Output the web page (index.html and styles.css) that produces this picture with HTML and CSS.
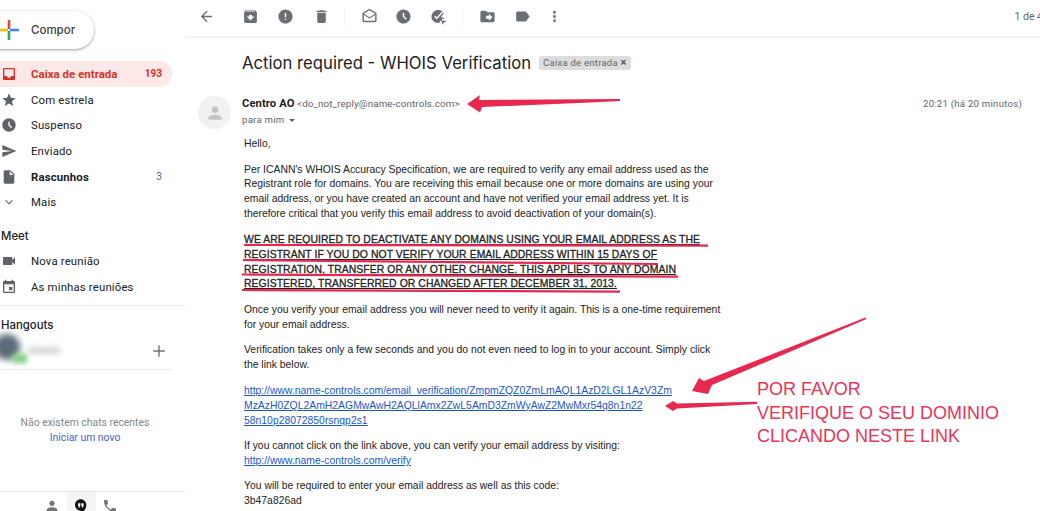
FILE: index.html
```html
<!DOCTYPE html>
<html lang="pt">
<head>
<meta charset="utf-8">
<title>Action required - WHOIS Verification</title>
<link rel="stylesheet" href="styles.css">
</head>
<body>
<div class="app">
  <aside class="sidebar">
    <div class="compose-wrap">
      <button class="compose">
        <svg class="plus" viewBox="0 0 20 20"><rect x="0" y="8.700" width="9" height="2.600" fill="#fbbc04"/><rect x="8.700" y="0" width="2.600" height="9" fill="#ea4335"/><rect x="11" y="8.700" width="9" height="2.600" fill="#4285f4"/><rect x="8.700" y="11" width="2.600" height="9" fill="#34a853"/></svg>
        <span>Compor</span>
      </button>
    </div>
    <nav class="nav">
      <a class="row active"><svg class="ic" viewBox="0 0 24 24"><path d="M19 3H5c-1.100 0-2 .9-2 2v14c0 1.100.9 2 2 2h14c1.100 0 2-.9 2-2V5c0-1.100-.9-2-2-2zm0 12h-4c0 1.660-1.350 3-3 3s-3-1.340-3-3H5V5h14v10z"/></svg><span class="lab">Caixa de entrada</span><span class="cnt">193</span></a>
      <a class="row"><svg class="ic" viewBox="0 0 24 24"><path d="M12 17.270L18.180 21l-1.640-7.030L22 9.240l-7.190-.61L12 2 9.190 8.630 2 9.240l5.460 4.730L5.820 21z"/></svg><span class="lab">Com estrela</span></a>
      <a class="row"><svg class="ic" viewBox="0 0 24 24"><path d="M11.990 2C6.470 2 2 6.480 2 12s4.470 10 9.990 10C17.520 22 22 17.520 22 12S17.520 2 11.990 2zm3.300 14.710L11 12.410V7h2v4.590l3.710 3.710-1.420 1.410z"/></svg><span class="lab">Suspenso</span></a>
      <a class="row"><svg class="ic" viewBox="0 0 24 24"><path d="M2.010 21L23 12 2.010 3 2 10l15 2-15 2z"/></svg><span class="lab">Enviado</span></a>
      <a class="row strong"><svg class="ic" viewBox="0 0 24 24"><path d="M14 2H6c-1.100 0-1.990.9-1.990 2L4 20c0 1.100.89 2 1.990 2H18c1.100 0 2-.9 2-2V8l-6-6zm-1 7V3.500L18.500 9H13z"/></svg><span class="lab">Rascunhos</span><span class="cnt">3</span></a>
      <a class="row"><svg class="ic small" viewBox="0 0 24 24"><path d="M7.410 8.590L12 13.170l4.590-4.580L18 10l-6 6-6-6z"/></svg><span class="lab">Mais</span></a>
    </nav>
    <section class="meet">
      <h3 class="head">Meet</h3>
      <a class="row"><svg class="ic" viewBox="0 0 24 24"><path d="M17 10.500V7c0-.55-.45-1-1-1H4c-.55 0-1 .45-1 1v10c0 .55.45 1 1 1h12c.55 0 1-.45 1-1v-3.500l4 4v-11l-4 4z"/></svg><span class="lab">Nova reunião</span></a>
      <a class="row"><svg class="ic" viewBox="0 0 24 24"><path d="M17 12h-5v5h5v-5zM16 1v2H8V1H6v2H5c-1.110 0-1.990.9-1.990 2L3 19c0 1.100.89 2 2 2h14c1.100 0 2-.9 2-2V5c0-1.100-.9-2-2-2h-1V1h-2zm3 18H5V8h14v11z"/></svg><span class="lab">As minhas reuniões</span></a>
    </section>
    <section class="hangouts">
      <h3 class="head">Hangouts</h3>
      <div class="contact">
        <div class="blur-avatar"></div>
        <div class="blur-status"></div>
        <div class="blur-name"></div>
        <svg class="add" viewBox="0 0 12 12"><path d="M5.400 1h1.200v4.400H11v1.200H6.600V11H5.400V6.600H1V5.400h4.400z"/></svg>
      </div>
    </section>
    <div class="empty">
      <p>Não existem chats recentes</p>
      <a>Iniciar um novo</a>
    </div>
    <div class="tabs">
      <div class="tab"><svg viewBox="0 0 24 24"><path d="M12 12c2.200 0 4-1.800 4-4s-1.800-4-4-4-4 1.800-4 4 1.800 4 4 4zm0 2c-2.700 0-8 1.300-8 4v2h16v-2c0-2.700-5.300-4-8-4z"/></svg></div>
      <div class="tab on"><svg viewBox="0 0 24 24"><path d="M11.500 2C6.800 2 3 5.800 3 10.500S6.800 19 11.500 19H12v3.500c4.900-2.300 8-7 8-12C20 5.800 16.200 2 11.500 2zM11 12l-1.500 2.500H8L9 12H7.500V8H11v4zm5 0l-1.500 2.500H13l1-2.500h-1.500V8H16v4z"/></svg></div>
      <div class="tab"><svg viewBox="0 0 24 24"><path d="M6.620 10.790c1.440 2.830 3.760 5.140 6.590 6.590l2.200-2.200c.27-.27.67-.36 1.020-.24 1.120.37 2.330.57 3.570.57.550 0 1 .45 1 1V20c0 .55-.45 1-1 1C10.610 21 3 13.390 3 4c0-.55.45-1 1-1h3.500c.55 0 1 .45 1 1 0 1.250.2 2.450.57 3.570.11.350.03.740-.25 1.020l-2.200 2.200z"/></svg></div>
    </div>
  </aside>

  <main class="main">
    <header class="toolbar">
      <svg class="tool back" viewBox="0 0 24 24"><path d="M20 11H7.830l5.590-5.590L12 4l-8 8 8 8 1.410-1.410L7.830 13H20v-2z"/></svg>
      <div class="group g1">
        <svg class="tool" viewBox="0 0 24 24"><path d="M20.540 5.230l-1.390-1.680C18.880 3.210 18.470 3 18 3H6c-.47 0-.88.21-1.160.55L3.460 5.230C3.170 5.570 3 6.020 3 6.500V19c0 1.100.9 2 2 2h14c1.100 0 2-.9 2-2V6.500c0-.48-.17-.93-.46-1.270zM12 17.500L6.500 12H10v-2h4v2h3.500L12 17.500zM5.120 5l.81-1h12l.94 1H5.120z"/></svg>
        <svg class="tool" viewBox="0 0 24 24"><path d="M12 2C6.480 2 2 6.480 2 12s4.480 10 10 10 10-4.480 10-10S17.520 2 12 2zm1 15h-2v-2h2v2zm0-4h-2V7h2v6z"/></svg>
        <svg class="tool" viewBox="0 0 24 24"><path d="M6 19c0 1.100.9 2 2 2h8c1.100 0 2-.9 2-2V7H6v12zM19 4h-3.500l-1-1h-5l-1 1H5v2h14V4z"/></svg>
      </div>
      <div class="group g2">
        <svg class="tool" viewBox="0 0 24 24"><path d="M21.990 8c0-.72-.37-1.350-.94-1.700L12 1 2.950 6.300C2.380 6.650 2 7.280 2 8v10c0 1.100.9 2 2 2h16c1.100 0 2-.9 2-2l-.01-10zM20 18H4V9.900l8 5 8-5V18zM12 13L4 8l8-4.700L20 8l-8 5z"/></svg>
        <svg class="tool" viewBox="0 0 24 24"><path d="M11.990 2C6.470 2 2 6.480 2 12s4.470 10 9.990 10C17.520 22 22 17.520 22 12S17.520 2 11.990 2zm3.300 14.710L11 12.410V7h2v4.590l3.710 3.710-1.420 1.410z"/></svg>
        <svg class="tool" viewBox="0 0 24 24"><path d="M11 3a9 9 0 1 0 8.900 10.300H16v-1.300l3.500-4.200A9 9 0 0 0 11 3zm-1.500 13L5.800 12.300l1.500-1.500 2.200 2.200 8-8.500 1.500 1.400-9.500 10.100zM19 15v3h3v2h-3v3h-2v-3h-3v-2h3v-3z"/></svg>
      </div>
      <div class="group g3">
        <svg class="tool" viewBox="0 0 24 24"><path d="M20 6h-8l-2-2H4c-1.100 0-2 .9-2 2v12c0 1.100.9 2 2 2h16c1.100 0 2-.9 2-2V8c0-1.100-.9-2-2-2zm-6 12v-3h-4v-4h4V8l5 5-5 5z"/></svg>
        <svg class="tool" viewBox="0 0 24 24"><path d="M17.630 5.840C17.270 5.330 16.670 5 16 5L5 5.010C3.900 5.010 3 5.900 3 7v10c0 1.100.9 1.990 2 1.990L16 19c.67 0 1.270-.33 1.630-.84L22 12l-4.370-6.160z"/></svg>
        <svg class="tool kebab" viewBox="0 0 24 24"><path d="M12 8c1.100 0 2-.9 2-2s-.9-2-2-2-2 .9-2 2 .9 2 2 2zm0 2c-1.100 0-2 .9-2 2s.9 2 2 2 2-.9 2-2-.9-2-2-2zm0 6c-1.100 0-2 .9-2 2s.9 2 2 2 2-.9 2-2-.9-2-2-2z"/></svg>
      </div>
      <span class="pager">1 de 4</span>
    </header>

    <div class="subject-row">
      <h1 class="subject">Action required - WHOIS Verification</h1>
      <span class="chip">Caixa de entrada <b>×</b></span>
    </div>

    <div class="message">
      <div class="avatar"><svg viewBox="0 0 24 24"><path d="M12 12c2.200 0 4-1.800 4-4s-1.800-4-4-4-4 1.800-4 4 1.800 4 4 4zm0 2c-2.700 0-8 1.300-8 4v2h16v-2c0-2.700-5.300-4-8-4z"/></svg></div>
      <div class="msg-col">
        <div class="sender-row">
          <div class="sender"><b>Centro AO</b> <span>&lt;do_not_reply@name-controls.com&gt;</span></div>
          <div class="time">20:21 (há 20 minutos)</div>
        </div>
        <div class="tome">para mim <i class="caret"></i></div>
        <div class="body">
          <p>Hello,</p>
          <p>Per ICANN's WHOIS Accuracy Specification, we are required to verify any email address used as the<br>Registrant role for domains. You are receiving this email because one or more domains are using your<br>email address, or you have created an account and have not verified your email address yet. It is<br>therefore critical that you verify this email address to avoid deactivation of your domain(s).</p>
          <p class="caps">WE ARE REQUIRED TO DEACTIVATE ANY DOMAINS USING YOUR EMAIL ADDRESS AS THE<br>REGISTRANT IF YOU DO NOT VERIFY YOUR EMAIL ADDRESS WITHIN 15 DAYS OF<br>REGISTRATION, TRANSFER OR ANY OTHER CHANGE. THIS APPLIES TO ANY DOMAIN<br>REGISTERED, TRANSFERRED OR CHANGED AFTER DECEMBER 31, 2013.</p>
          <p>Once you verify your email address you will never need to verify it again. This is a one-time requirement<br>for your email address.</p>
          <p>Verification takes only a few seconds and you do not even need to log in to your account. Simply click<br>the link below.</p>
          <p><a>http://www.name-controls.com/email_verification/ZmpmZQZ0ZmLmAQL1AzD2LGL1AzV3Zm<br>MzAzH0ZQL2AmH2AGMwAwH2AQLlAmx2ZwL5AmD3ZmWyAwZ2MwMxr54q8n1n22<br>58n10p28072850rsnqp2s1</a></p>
          <p>If you cannot click on the link above, you can verify your email address by visiting:<br><a>http://www.name-controls.com/verify</a></p>
          <p>You will be required to enter your email address as well as this code:<br>3b47a826ad</p>
        </div>
      </div>
    </div>
  </main>
</div>

<svg class="marks" viewBox="0 0 1040 511">
  <polygon points="620,99 620,101 590,102.500 482,107 480,112.500 467,104 480,95 479,100"/>
  <path class="uline" d="M244 245L708 245.700M243 260L658 264M242 274.500L678 276.700M242 290L620 291.700"/>
  <polygon points="865.500,317.500 866.500,319 712,385 708,394 692,391 699,378 704,381"/>
  <polygon points="757,401.800 757,404 677,408.500 673,411 665,406 673,401 677,403.500"/>
</svg>
<p class="note">POR FAVOR<br>VERIFIQUE O SEU DOMINIO<br>CLICANDO NESTE LINK</p>
</body>
</html>
```
FILE: styles.css
```css
* { box-sizing: border-box; }
html, body { margin: 0; padding: 0; height: 100%; overflow: hidden; background: #fff; }
body { font-family: Roboto, "Liberation Sans", sans-serif; color: #202124; position: relative; }
.app { display: flex; width: 1040px; height: 511px; overflow: hidden; }

.sidebar { width: 185px; flex: none; height: 511px; display: flex; flex-direction: column; }
.compose-wrap { padding: 11px 0 12px; margin-left: -30px; }
.compose { display: flex; align-items: center; gap: 12px; width: 124px; height: 38px; padding: 0 0 0 29px; border: 0; border-radius: 19px; background: #fff; box-shadow: 0 1px 2px rgba(60,64,67,.3), 0 1px 3px 1px rgba(60,64,67,.15); font: 500 11.500px Inter, "Open Sans", sans-serif; color: #3c4043; }
.plus { width: 20px; height: 20px; flex: none; }

.row { display: flex; align-items: center; height: 25.700px; width: 172px; padding-left: 1px; font-size: 11.400px; letter-spacing: .15px; color: #202124; border-radius: 0 13px 13px 0; }
.ic { width: 16px; height: 16px; flex: none; fill: #5f6368; }
.ic.small { fill: #80868b; }
.lab { margin-left: 14px; flex: 1; white-space: nowrap; }
.cnt { margin-right: 10px; font-size: 10px; color: #5f6368; }
.active { background: #fce8e6; color: #d93025; font-weight: 700; letter-spacing: .05px; }
.active .ic { fill: #d93025; }
.active .cnt { color: #d93025; font-weight: 700; }
.strong .lab { font-weight: 700; }

.meet { margin-top: 10px; padding-bottom: 5px; border-bottom: 1px solid #eceded; }
.head { margin: 0; padding-left: 1px; height: 23px; font: 500 11.400px/23px Inter, "Open Sans", sans-serif; color: #202124; }
.hangouts { margin-top: 7px; }
.hangouts .head { height: 24px; line-height: 24px; }
.contact { position: relative; height: 33px; width: 172px; border-bottom: 1px solid #e8eaed; }
.blur-avatar { position: absolute; left: -6px; top: -3px; width: 26px; height: 26px; border-radius: 50%; background: #5a6c78; filter: blur(3px); }
.blur-status { position: absolute; left: 13px; top: 17px; width: 14px; height: 9px; background: #7ed07f; filter: blur(2.500px); }
.blur-name { position: absolute; left: 28px; top: 11px; width: 32px; height: 5px; background: #c4c4c4; filter: blur(3px); }
.add { position: absolute; right: 6px; top: 7px; width: 14px; height: 14px; fill: #70757a; }

.empty { margin-top: 45.500px; text-align: center; font-size: 10.400px; line-height: 15px; width: 170px; }
.empty p { margin: 0; color: #80868b; }
.empty a { color: #3f66cf; }
.tabs { margin-top: auto; height: 20px; border-top: 1px solid #e4e4e4; display: flex; justify-content: center; overflow: hidden; padding-right: 23px; }
.tab { width: 29px; height: 20px; display: flex; justify-content: center; padding-top: 6px; }
.tab.on { background: #f5f5f5; }
.tab svg { width: 16px; height: 16px; fill: #70757a; flex: none; }
.tab.on svg { fill: #111; }

.main { flex: 1; min-width: 0; position: relative; }
.toolbar { height: 38px; display: flex; align-items: center; padding: 0 0 4px 12.500px; border-bottom: 2px solid #f3f3f3; }
.tool { width: 17px; height: 17px; fill: #6b6f73; flex: none; }
.back { margin-right: 13px; }
.group { display: flex; height: 17px; }
.g1 { gap: 18.500px; padding: 0 14.500px 0 14px; border-right: 1px solid #efefef; }
.g2 { gap: 17.500px; padding: 0 15.500px; border-right: 1px solid #efefef; }
.g3 { gap: 18px; padding-left: 15.500px; }
.kebab { margin-left: -3px; }
.pager { margin-left: auto; margin-right: -3px; font-size: 10.500px; color: #5f6368; white-space: nowrap; }

.subject-row { display: flex; align-items: center; padding-left: 57px; height: 50px; }
.subject { margin: 0; font: 400 16.700px Inter, "Open Sans", sans-serif; color: #202124; white-space: nowrap; }
.chip { margin-left: 8px; height: 14px; padding: 0 4px; border-radius: 3px; background: #dddddd; font-size: 9.500px; line-height: 14px; letter-spacing: .25px; color: #666; white-space: nowrap; }
.chip b { font-weight: 700; font-size: 11px; line-height: 10px; color: #555; }

.message { display: flex; padding: 8px 0 0 13px; }
.avatar { width: 33px; height: 33px; border-radius: 50%; background: #f1f1f1; display: flex; align-items: center; justify-content: center; flex: none; }
.avatar svg { width: 20px; height: 20px; fill: #c4c4c4; }
.msg-col { margin-left: 11px; flex: 1; min-width: 0; }
.sender-row { display: flex; justify-content: space-between; padding: 2px 18px 0 0; line-height: 12px; }
.sender { font-size: 9.850px; letter-spacing: .1px; color: #5f6368; }
.sender b { font-size: 11.200px; color: #202124; }
.time { font-size: 9.600px; letter-spacing: .25px; color: #5f6368; }
.tome { margin-top: 4px; font-size: 9.600px; letter-spacing: .25px; color: #5f6368; line-height: 12px; display: flex; align-items: center; gap: 5px; }
.caret { width: 0; height: 0; border: 3px solid transparent; border-top: 3px solid #5f6368; border-bottom: 0; }

.body { padding: 11px 0 0 2px; font: 10.400px/14.900px "Liberation Sans", Arial, sans-serif; color: #222; white-space: nowrap; }
.body p { margin: 0 0 10.600px; }
.caps { color: #222; -webkit-text-stroke: .3px #222; letter-spacing: .07px; text-decoration: underline; }
.body a { color: #1a56cc; text-decoration: underline; }

.marks { position: absolute; left: 0; top: 0; width: 1040px; height: 511px; pointer-events: none; }
.marks polygon { fill: #e8294f; }
.uline { fill: none; stroke: #e8294f; stroke-width: 2.200; }
.note { position: absolute; left: 757px; top: 378px; margin: 0; font: 18px/23.500px "Liberation Sans", Arial, sans-serif; color: #e8355a; white-space: nowrap; }
```
